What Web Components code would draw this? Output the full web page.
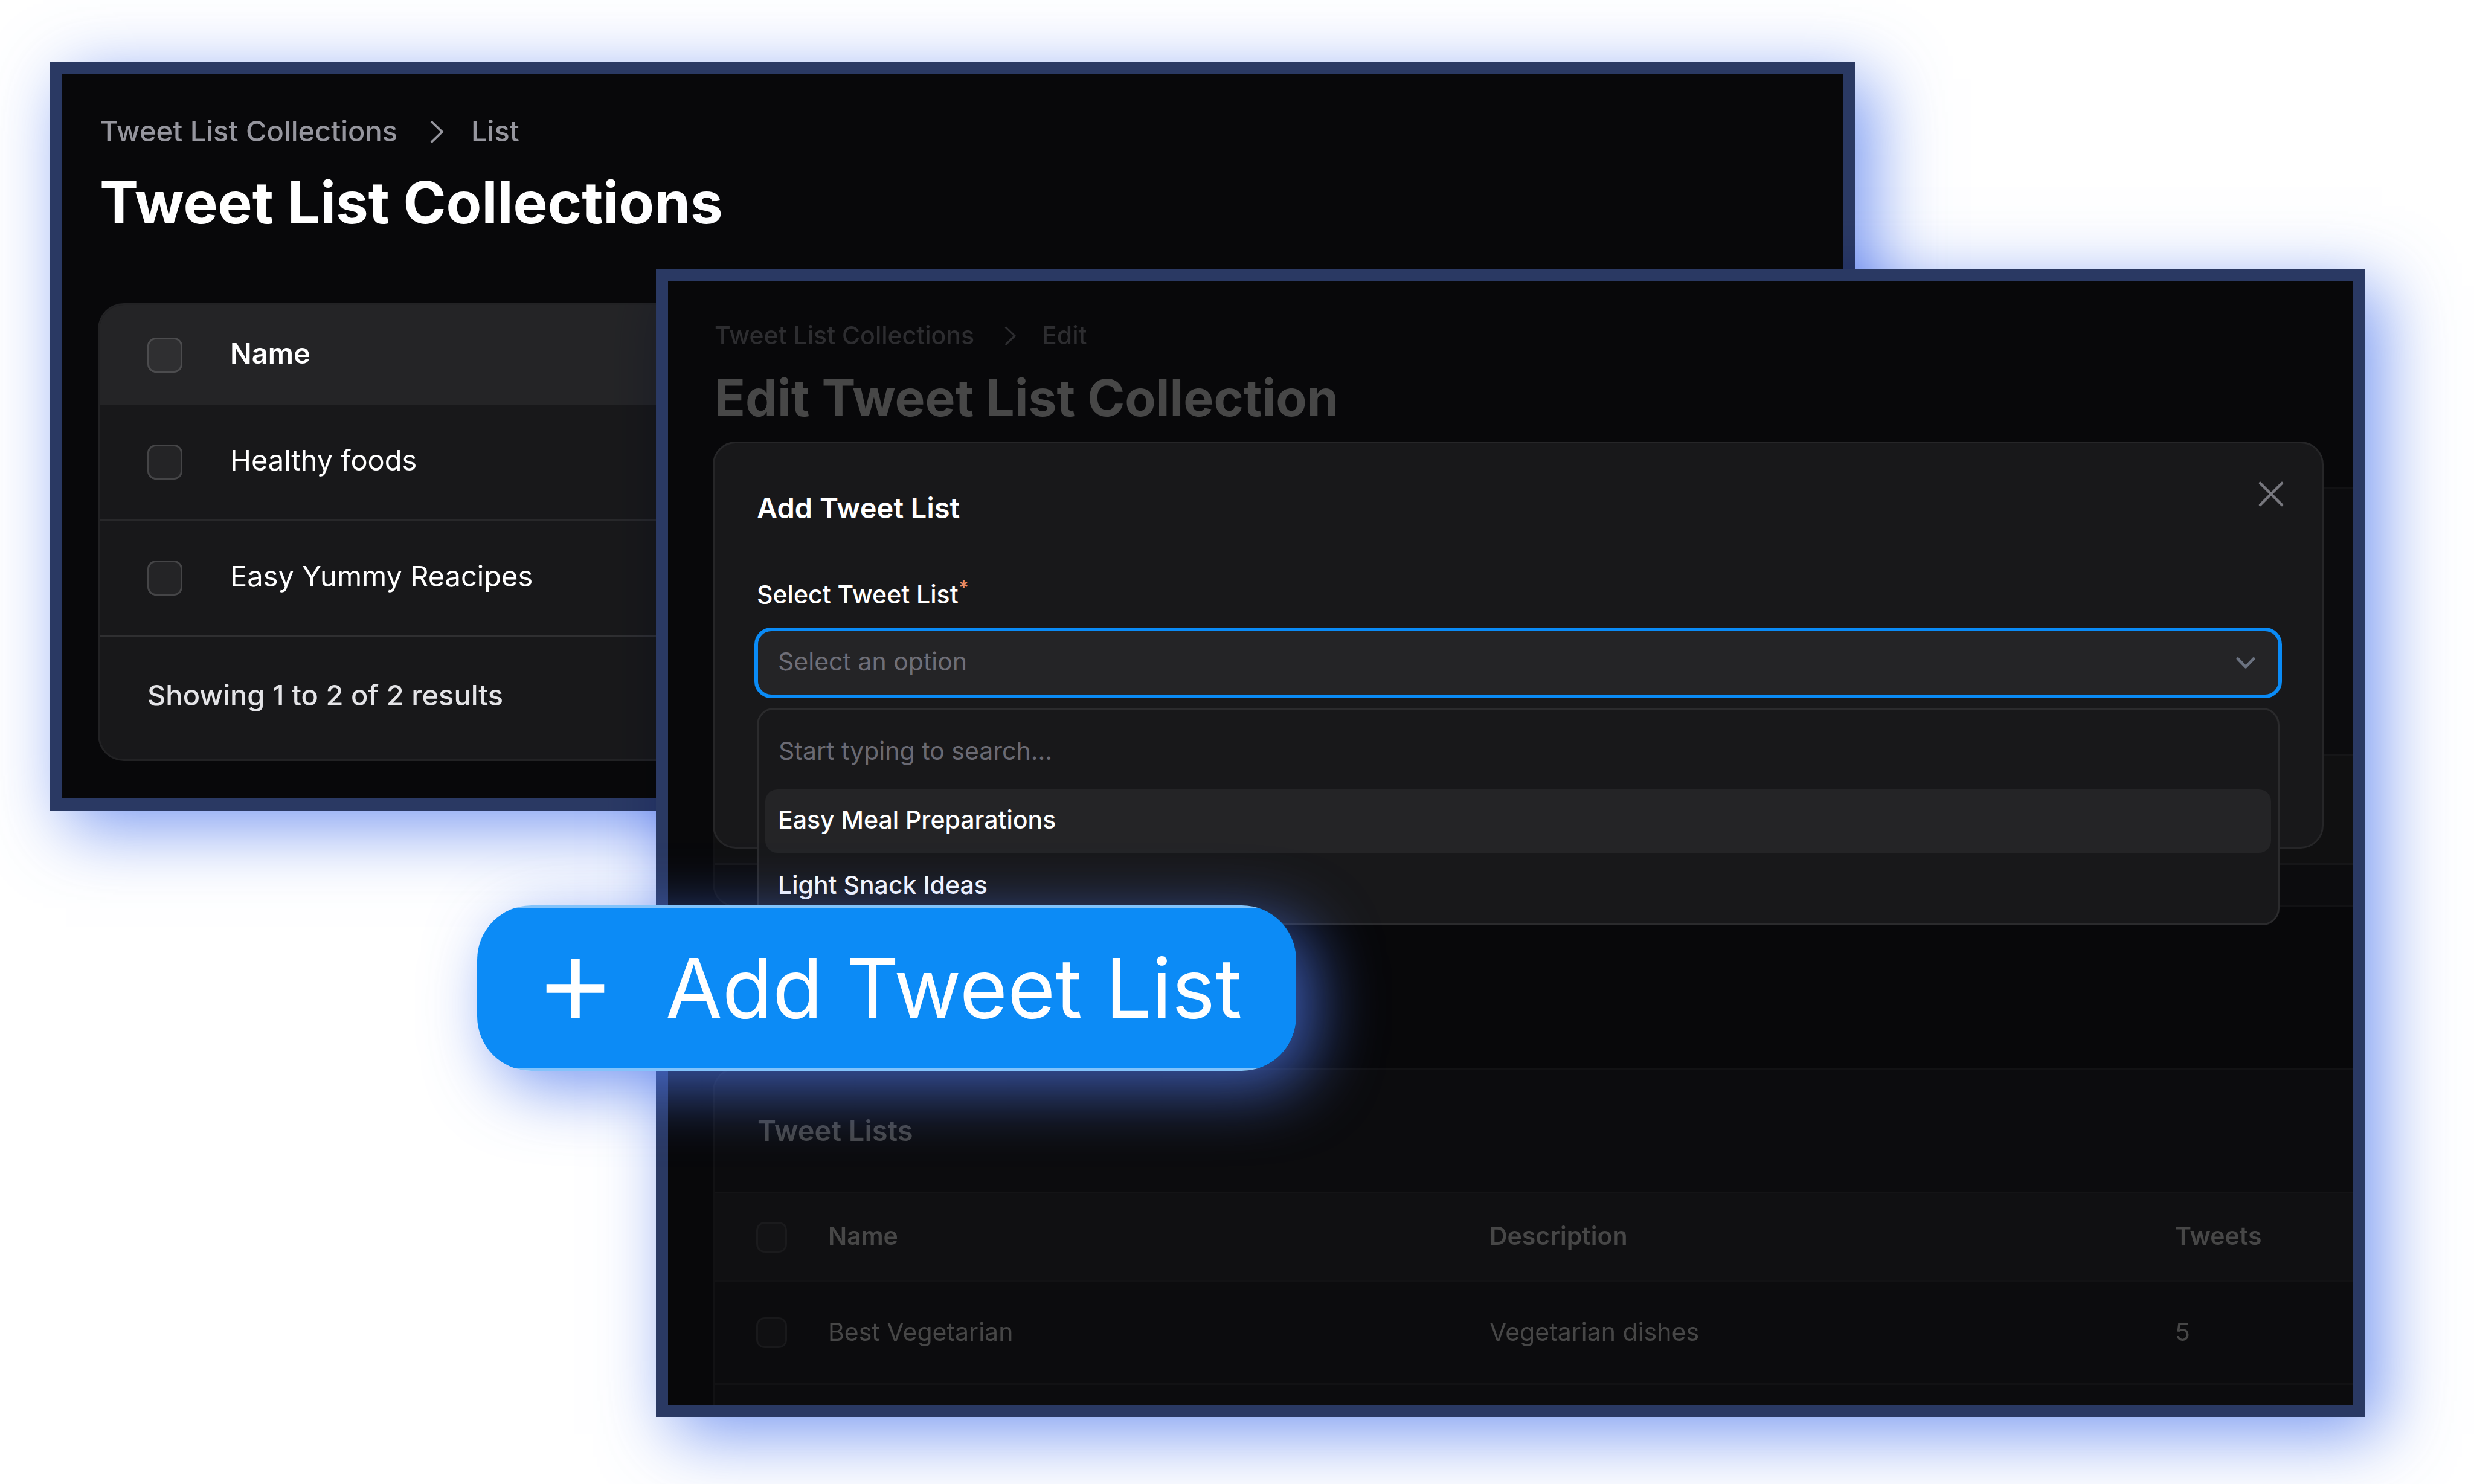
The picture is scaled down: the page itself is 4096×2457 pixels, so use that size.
<!DOCTYPE html>
<html lang="en">
<head>
<meta charset="utf-8">
<title>Tweet List Collections</title>
<style>
  html, body { margin: 0; background: #fff; }
  body { font-family: Inter, "Liberation Sans", sans-serif; }
</style>
</head>
<body>
<desk-stage>
  <app-window class="list">
    <crumb-trail parent="Tweet List Collections" current="List"></crumb-trail>
    <page-title>Tweet List Collections</page-title>
    <list-table></list-table>
  </app-window>
  <app-window class="edit">
    <crumb-trail parent="Tweet List Collections" current="Edit"></crumb-trail>
    <page-title>Edit Tweet List Collection</page-title>
    <section-card></section-card>
    <relation-table heading="Tweet Lists"></relation-table>
    <add-dialog></add-dialog>
  </app-window>
  <add-button>Add Tweet List</add-button>
</desk-stage>

<script>
const define = (name, html, setup) => customElements.define(name, class extends HTMLElement {
  constructor() {
    super();
    this.attachShadow({ mode: 'open' }).innerHTML = html;
  }
  connectedCallback() {
    if (setup) setup(this, this.shadowRoot);
  }
});

define('desk-stage', `
  <style>
    :host {
      display: block; position: relative; min-height: 100vh; overflow: hidden; background: #fff;
      --glow: 28px 28px 110px rgba(77, 120, 236, .76);
    }
    ::slotted(.list) {
      left: 82px; top: 103px; width: 73%;
      --size: 47px; --line: 68px; --title-size: 96px; --title-line: 120px;
      --crumb-gap: 27px; --title-gap: 24px;
      --pad: 60px 63px 65px;
      --crumb: #96969e; --title: #fff; --after-title: 110px;
    }
    ::slotted(.edit) {
      left: 1086px; right: 181px; top: 446px;
      --size: 41px; --line: 58px; --title-size: 84px; --title-line: 106px;
      --crumb-gap: 27px; --title-gap: 22px;
      --pad: 60px 0 0 77px;
      --crumb: #2d2d30; --title: #474747; --after-title: 98px;
    }
    ::slotted(add-button) { left: 790px; top: 1499px; }
  </style>
  <slot></slot>`);

define('app-window', `
  <style>
    :host { display: block; position: absolute; box-sizing: border-box; }
    /* The glow multiplies, so it tints white but leaves dark windows dark. */
    :host::before {
      content: ""; position: absolute; inset: 0;
      box-shadow: var(--glow); mix-blend-mode: multiply;
    }
    .frame {
      position: relative; overflow: hidden; border: 20px solid #2a3963;
      background: #08080a; padding: var(--pad);
    }
  </style>
  <div class="frame"><slot></slot></div>`);

define('crumb-trail', `
  <style>
    :host { display: block; color: var(--crumb); font-size: var(--size); line-height: var(--line); font-weight: 500; }
    nav { display: flex; align-items: center; gap: var(--crumb-gap); }
    a { color: inherit; text-decoration: none; }
    svg { width: var(--line); height: var(--line); fill: none; stroke: currentColor; stroke-width: 1.1; }
  </style>
  <nav aria-label="Breadcrumb">
    <a href="#" class="parent"></a>
    <svg viewBox="0 0 20 20" aria-hidden="true"><path d="M8.5 5.3l5.3 5.1-5.3 5.1"/></svg>
    <a href="#" class="current"></a>
  </nav>`, (el, root) => {
    root.querySelector('.parent').textContent = el.getAttribute('parent');
    root.querySelector('.current').textContent = el.getAttribute('current');
  });

define('page-title', `
  <style>
    :host { display: block; margin: var(--title-gap) 0 var(--after-title); }
    h1 { margin: 0; color: var(--title); font-size: var(--title-size); line-height: var(--title-line); font-weight: 700; }
  </style>
  <h1><slot></slot></h1>`);

const tick = `
  input {
    appearance: none; display: block; margin: 0; box-sizing: border-box;
    width: var(--tick); height: var(--tick); border-radius: 14px;
    background: var(--tick-fill); border: 3px solid var(--tick-edge);
  }`;

define('list-table', `
  <style>
    :host {
      display: block; overflow: hidden; border-radius: 40px; background: #18181a;
      box-shadow: 0 0 0 3px #222224; color: #fff; font-size: 47px; line-height: 68px;
      --tick: 58px; --tick-fill: #242426; --tick-edge: #454547;
    }
    ${tick}
    table { width: 100%; border-collapse: collapse; }
    th, td { box-sizing: border-box; padding: 0 0 6px; text-align: left; font-weight: 400; height: 191px; }
    th { height: 165px; font-weight: 600; background: #242426; --tick-fill: #2f2f31; --tick-edge: #4c4c4e; }
    .pick { width: 216px; padding: 0 0 0 79px; }
    tbody tr + tr td { border-top: 3px solid #28282a; }
    p { margin: 0; padding: 62px 79px 72px; border-top: 3px solid #2f2f31; color: #e4e4e7; font-weight: 500; }
  </style>
  <table>
    <thead><tr><th class="pick"><input type="checkbox" aria-label="Select all"></th><th>Name</th></tr></thead>
    <tbody>
      <tr><td class="pick"><input type="checkbox" aria-label="Select Healthy foods"></td><td>Healthy foods</td></tr>
      <tr><td class="pick"><input type="checkbox" aria-label="Select Easy Yummy Reacipes"></td><td>Easy Yummy Reacipes</td></tr>
    </tbody>
  </table>
  <p>Showing 1 to 2 of 2 results</p>`);

define('section-card', `
  <style>
    :host {
      display: grid; grid-template-rows: 438px 178px 67px; gap: 3px; overflow: hidden;
      border-radius: 35px 0 0 35px; background: #161618; box-shadow: 0 0 0 3px #121214;
      margin-bottom: 272px;
    }
    div { background: #0c0c0e; }
    .bar { background: #101011; }
  </style>
  <div></div><div class="bar"></div><div></div>`);

define('relation-table', `
  <style>
    :host {
      display: block; overflow: hidden; border-radius: 35px 0 0 0; background: #0c0c0e;
      box-shadow: 0 0 0 3px #121214; padding-bottom: 33px; color: #474747;
      font-size: 41px; line-height: 58px;
      --tick: 51px; --tick-fill: #101012; --tick-edge: #19191b;
    }
    ${tick}
    h2 { margin: 0; padding: 66px 71px; font-size: 47px; line-height: 70px; font-weight: 600; }
    table { width: 100%; border-collapse: collapse; table-layout: fixed; }
    th, td { box-sizing: border-box; padding: 0 0 4px; text-align: left; font-weight: 400; height: 170px; border-bottom: 3px solid #121214; }
    th { height: 147px; font-weight: 600; background: #101012; border-top: 3px solid #141416; --tick-fill: #131315; --tick-edge: #1b1b1d; }
    .pick { width: 188px; padding: 0 0 0 69px; }
    .name { width: 1095px; }
    .about { width: 1135px; }
  </style>
  <h2></h2>
  <table>
    <thead><tr><th class="pick"><input type="checkbox" aria-label="Select all"></th><th class="name">Name</th><th class="about">Description</th><th>Tweets</th></tr></thead>
    <tbody><tr><td class="pick"><input type="checkbox" aria-label="Select Best Vegetarian"></td><td>Best Vegetarian</td><td>Vegetarian dishes</td><td>5</td></tr></tbody>
  </table>`, (el, root) => {
    root.querySelector('h2').textContent = el.getAttribute('heading');
  });

define('add-dialog', `
  <style>
    :host {
      display: block; position: absolute; left: 74px; right: 48px; top: 265px;
      box-sizing: border-box; border: 3px solid #262628; border-radius: 38px; background: #18181a;
      padding: 71px 66px 246px; color: #fff; font-size: 41px; line-height: 58px;
    }
    h2 { margin: 0 0 78px; padding-left: 4px; font-size: 47px; line-height: 72px; font-weight: 600; }
    .close {
      position: absolute; right: 48px; top: 48px; padding: 0; border: 0; background: none; color: #77777e;
    }
    .close svg { display: block; width: 72px; height: 72px; }
    svg { fill: none; stroke: currentColor; stroke-width: 1.5; stroke-linecap: round; stroke-linejoin: round; }
    label { display: block; padding-left: 4px; margin: 0 0 26px; font-weight: 500; }
    sup { color: #e78c66; font-size: 31px; font-weight: 700; line-height: 0; vertical-align: super; }
    .field { position: relative; display: grid; align-items: center; }
    select, .field > svg { grid-area: 1 / 1; }
    select {
      appearance: none; box-sizing: border-box; width: 100%; height: 117px; margin: 0; padding: 0 33px 6px;
      font: inherit; color: #6f6f78; background: #242426; border: 6px solid #0a8bf6; border-radius: 28px; outline: 0;
    }
    .field > svg { justify-self: end; margin-right: 36px; width: 48px; height: 48px; color: #6b7280; stroke-width: 2.4; pointer-events: none; }
    .menu {
      position: absolute; left: 4px; right: 4px; top: 133px; box-sizing: border-box;
      border: 3px solid #2b2b2d; border-radius: 28px; background: #18181a; padding: 3px 11px 12px;
    }
    .menu input {
      display: block; width: 100%; box-sizing: border-box; height: 129px; margin: 0; padding: 0 22px;
      border: 0; outline: 0; background: none; font: inherit; color: #fff;
    }
    .menu input::placeholder { color: #6a6a73; opacity: 1; }
    ul { margin: 0; padding: 0; list-style: none; font-weight: 500; }
    li { padding: 21px 21px 26px; border-radius: 20px; }
    li[aria-selected=true] { background: #242426; }
    li + li { padding-top: 24px; padding-bottom: 23px; }
  </style>
  <h2>Add Tweet List</h2>
  <button class="close" type="button" aria-label="Close">
    <svg viewBox="0 0 24 24" aria-hidden="true"><path d="M6 18L18 6M6 6l12 12"/></svg>
  </button>
  <label for="pick">Select Tweet List<sup>*</sup></label>
  <div class="field">
    <select id="pick"><option>Select an option</option></select>
    <svg viewBox="0 0 24 24" aria-hidden="true"><path d="M5.5 8.3l6.5 6.8 6.5-6.8"/></svg>
    <div class="menu">
      <input type="search" aria-label="Search tweet lists" placeholder="Start typing to search...">
      <ul role="listbox">
        <li role="option" aria-selected="true">Easy Meal Preparations</li>
        <li role="option" aria-selected="false">Light Snack Ideas</li>
      </ul>
    </div>
  </div>`);

define('add-button', `
  <style>
    :host { display: block; position: absolute; }
    button {
      display: flex; align-items: center; gap: 53px; height: 274px; margin: 0; padding: 0 90px 0 66px;
      border: 0; border-radius: 90px; color: #fff; box-shadow: var(--glow);
      background: linear-gradient(#82c3fb 4px, #0c8bf6 4px, #0c8bf6 calc(100% - 4px), #82c3fb calc(100% - 4px));
      font: 400 136px/1 Inter, "Liberation Sans", sans-serif; white-space: nowrap;
    }
    svg { width: 193px; height: 193px; fill: none; stroke: currentColor; stroke-width: 1.5; }
  </style>
  <button type="button">
    <svg viewBox="0 0 20 20" aria-hidden="true"><path d="M10 4.9v10.2M5.05 10h9.9"/></svg>
    <span><slot></slot></span>
  </button>`);
</script>
</body>
</html>
